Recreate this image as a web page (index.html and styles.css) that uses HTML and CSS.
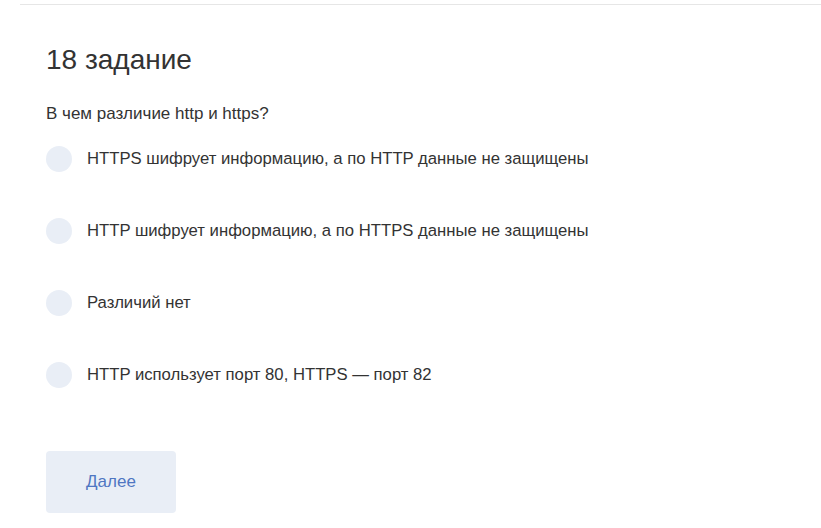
FILE: index.html
```html
<!DOCTYPE html>
<html lang="ru">
<head>
<meta charset="utf-8">
<link rel="stylesheet" href="styles.css">
</head>
<body>
<div class="page">
  <section class="task">
    <h1 class="title">18 задание</h1>
    <p class="question">В чем различие http и https?</p>
    <ul class="options">
      <li class="option"><span class="radio"></span><span class="label">HTTPS шифрует информацию, а по HTTP данные не защищены</span></li>
      <li class="option"><span class="radio"></span><span class="label">HTTP шифрует информацию, а по HTTPS данные не защищены</span></li>
      <li class="option"><span class="radio"></span><span class="label">Различий нет</span></li>
      <li class="option"><span class="radio"></span><span class="label">HTTP использует порт 80, HTTPS — порт 82</span></li>
    </ul>
    <button class="next">Далее</button>
  </section>
</div>
</body>
</html>
```

FILE: styles.css
```css
* { box-sizing: border-box; }
html, body { margin: 0; padding: 0; background: #fff; }
body {
  font-family: "Liberation Sans", Arial, sans-serif;
  color: #333;
}
.page {
  padding-top: 4px;
}
.task {
  margin-left: 20px;
  border-top: 1px solid #e6e6e6;
  padding: 37px 0 0 26px;
}
.title {
  margin: 0;
  font-size: 28px;
  font-weight: 400;
  line-height: 36px;
  color: #333;
}
.question {
  margin: 25px 0 0;
  font-size: 17px;
  line-height: 22px;
}
.options {
  list-style: none;
  margin: 21px 0 0;
  padding: 0;
  display: flex;
  flex-direction: column;
  gap: 46px;
}
.option {
  display: flex;
  align-items: center;
  gap: 15px;
  height: 26px;
  font-size: 16.7px;
}
.radio {
  width: 26px;
  height: 26px;
  border-radius: 50%;
  background: #e9eef6;
  flex: none;
}
.next {
  margin-top: 63px;
  width: 130px;
  height: 62px;
  border: none;
  border-radius: 4px;
  background: #e9eef6;
  color: #4f76c2;
  font-family: inherit;
  font-size: 17px;
  cursor: pointer;
}
```
